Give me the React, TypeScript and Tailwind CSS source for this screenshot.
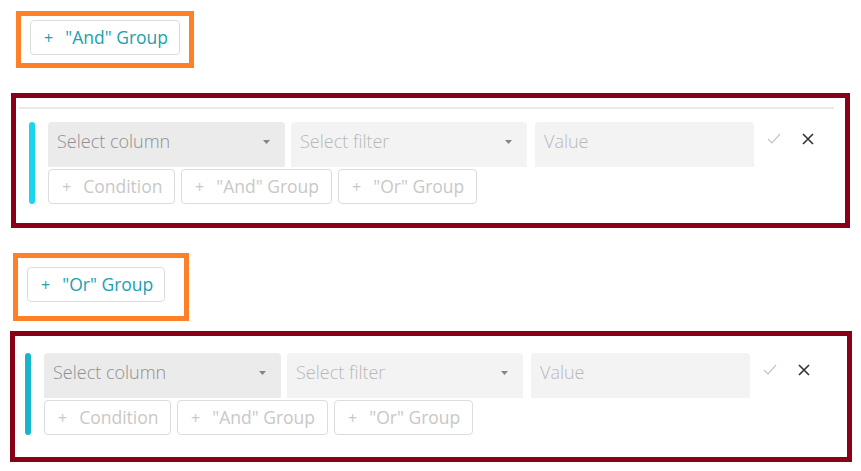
import React from "react";

const font = { fontFamily: "'Open Sans', 'Noto Sans', sans-serif" };

function Caret() {
  return (
    <svg width="7" height="4" viewBox="0 0 7 4" className="shrink-0">
      <path d="M0 0 L7 0 L3.5 4 Z" fill="#858585" />
    </svg>
  );
}

function AddButton({ label, active, className }: { label: string; active?: boolean; className?: string }) {
  return (
    <button
      className={`flex h-[35px] items-center rounded-[4px] border border-[#dcdcdc] bg-white text-[17.5px] leading-none ${
        active ? "text-[#1b9fb2]" : "text-[#c8c8c8]"
      } ${className ?? ""}`}
    >
      <span className="mr-[12px] text-[16px]">+</span>
      <span className="pt-[1px]">{label}</span>
    </button>
  );
}

function ConditionGroup({ bar }: { bar: string }) {
  return (
    <div className="flex">
      <div className={`w-[6px] rounded-full ${bar}`} />
      <div className="ml-[13px] flex flex-col gap-[2px]">
        <div className="flex items-start">
          <div className="flex h-[45px] w-[237px] items-center justify-between rounded-t-[4px] bg-[#ebebeb] pl-[9px] pr-[15px] pb-[6px]">
            <span className="text-[18px] font-light text-[#8f8f8f]">Select column</span>
            <Caret />
          </div>
          <div className="ml-[6px] flex h-[45px] w-[236px] items-center justify-between rounded-t-[4px] bg-[#f3f3f3] pl-[9px] pr-[15px] pb-[6px]">
            <span className="text-[18px] font-light text-[#b8b8b8]">Select filter</span>
            <Caret />
          </div>
          <div className="ml-[8px] flex h-[45px] w-[219px] items-center rounded-t-[4px] bg-[#f3f3f3] pl-[9px] pb-[6px]">
            <span className="text-[18px] font-light text-[#b8b8b8]">Value</span>
          </div>
          <div className="ml-[13px] flex h-[33px] items-center gap-[21px]">
            <svg width="14" height="11" viewBox="0 0 14 11">
              <path d="M1 6 L5 10 L13 1" fill="none" stroke="#c4c4c4" strokeWidth="1.2" />
            </svg>
            <svg width="12" height="12" viewBox="0 0 12 12">
              <path d="M1 1 L11 11 M11 1 L1 11" fill="none" stroke="#333" strokeWidth="1.6" />
            </svg>
          </div>
        </div>
        <div className="flex gap-[6px]">
          <AddButton label="Condition" className="w-[127px] pl-[13px]" />
          <AddButton label={'"And" Group'} className="w-[151px] pl-[13px]" />
          <AddButton label={'"Or" Group'} className="w-[139px] pl-[13px]" />
        </div>
      </div>
    </div>
  );
}

export default function App() {
  return (
    <div className="h-[471px] w-[861px] overflow-hidden bg-white pt-[11px]" style={font}>
      <div className="ml-[16px] h-[57px] w-[178px] border-[5px] border-[#fe8128] pl-[9px] pt-[4px]">
        <AddButton label={'"And" Group'} active className="w-[150px] pl-[13px]" />
      </div>

      <div className="ml-[11px] mt-[25px] h-[135px] w-[839px] border-[5px] border-[#8a0017] pt-[9px]">
        <div className="ml-[3px] mr-[11px] h-[2px] bg-[#e9e9e9]" />
        <div className="ml-[13px] mt-[13px]">
          <ConditionGroup bar="bg-[#1bd4ee]" />
        </div>
      </div>

      <div className="ml-[13px] mt-[25px] h-[68px] w-[176px] border-[5px] border-[#fe8128] pl-[9px] pt-[9px]">
        <AddButton label={'"Or" Group'} active className="w-[138px] pl-[13px]" />
      </div>

      <div className="ml-[10px] mt-[10px] h-[131px] w-[842px] border-[5px] border-[#8a0017] pl-[10px] pt-[17px]">
        <ConditionGroup bar="bg-[#16b6cb]" />
      </div>
    </div>
  );
}
